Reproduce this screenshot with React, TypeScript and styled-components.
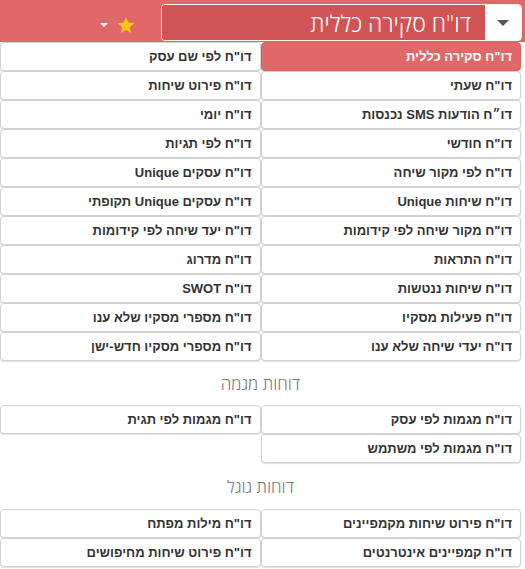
import styled, { createGlobalStyle } from 'styled-components'

const GlobalStyle = createGlobalStyle`
  body {
    margin: 0;
    background: #fff;
    font-family: "Liberation Sans", Arial, sans-serif;
    direction: rtl;
  }
`

const Page = styled.div`
  width: 525px;
  height: 569px;
  overflow: hidden;
`

const Header = styled.header`
  display: flex;
  align-items: center;
  height: 42px;
  padding-right: 3px;
  background-color: #e16868;
  box-sizing: border-box;
`

const Select = styled.div`
  display: flex;
  width: 361px;
  height: 37px;
  margin-top: 3px;
  border: 1px solid #f4f4f4;
  border-radius: 4px;
  overflow: hidden;
  box-sizing: border-box;
`

const CaretBox = styled.div`
  display: flex;
  align-items: center;
  justify-content: center;
  width: 36px;
  background-color: #fff;
`

const SelectValue = styled.div`
  flex: 1;
  display: flex;
  align-items: center;
  padding-right: 14px;
  background-color: #d05455;
  color: #fff;
  font-family: "Open Sans", "DejaVu Sans", sans-serif;
  font-size: 23px;
  font-weight: 300;
`

const Tools = styled.div`
  display: flex;
  align-items: center;
  gap: 9px;
  margin-top: 8px;
  margin-right: 26px;
`

const Menu = styled.div`
  width: 521px;
  margin-right: auto;
`

const Grid = styled.div`
  display: grid;
  grid-template-columns: 1fr 1fr;
  grid-auto-rows: 29px;
`

const Cell = styled.div<{ $active?: boolean }>`
  display: flex;
  align-items: center;
  padding-right: 8px;
  border: 1px solid ${(p) => (p.$active ? '#dc6060' : '#d2d2d2')};
  border-radius: 4px;
  box-shadow: 0 1px 1px rgba(0, 0, 0, 0.12);
  background-color: ${(p) => (p.$active ? '#e16868' : '#fff')};
  color: ${(p) => (p.$active ? '#fff' : '#333')};
  font-size: 13px;
  font-weight: bold;
  white-space: nowrap;
  box-sizing: border-box;
`

const SectionTitle = styled.div<{ $height: number }>`
  display: flex;
  align-items: center;
  justify-content: center;
  height: ${(p) => p.$height}px;
  color: #7a7a7a;
  font-family: "Open Sans", "DejaVu Sans", sans-serif;
  font-size: 17px;
  font-weight: 300;
`

function DownCaret({ color, size }: { color: string; size: number }) {
  return (
    <svg width={size} height={size / 2} viewBox="0 0 10 5">
      <path d="M0 0 L10 0 L5 5 Z" fill={color} />
    </svg>
  )
}

function Star() {
  return (
    <svg width="18" height="17" viewBox="0 0 24 23">
      <path
        d="M12 0 L15.1 7.6 L23.4 8.3 L17.1 13.7 L19 21.8 L12 17.5 L5 21.8 L6.9 13.7 L0.6 8.3 L8.9 7.6 Z"
        fill="#f8c41a"
      />
    </svg>
  )
}

type Row = [string, string?]

const generalRows: Row[] = [
  ['דו"ח סקירה כללית', 'דו"ח לפי שם עסק'],
  ['דו"ח שעתי', 'דו"ח פירוט שיחות'],
  ['דו״ח הודעות SMS נכנסות', 'דו"ח יומי'],
  ['דו"ח חודשי', 'דו"ח לפי תגיות'],
  ['דו"ח לפי מקור שיחה', 'דו"ח עסקים Unique'],
  ['דו"ח שיחות Unique', 'דו"ח עסקים Unique תקופתי'],
  ['דו"ח מקור שיחה לפי קידומות', 'דו"ח יעד שיחה לפי קידומות'],
  ['דו"ח התראות', 'דו"ח מדרוג'],
  ['דו"ח שיחות ננטשות', 'דו"ח SWOT'],
  ['דו"ח פעילות מסקיו', 'דו"ח מספרי מסקיו שלא ענו'],
  ['דו"ח יעדי שיחה שלא ענו', 'דו"ח מספרי מסקיו חדש-ישן'],
]

const trendRows: Row[] = [
  ['דו"ח מגמות לפי עסק', 'דו"ח מגמות לפי תגית'],
  ['דו"ח מגמות לפי משתמש'],
]

const googleRows: Row[] = [
  ['דו"ח פירוט שיחות מקמפיינים', 'דו"ח מילות מפתח'],
  ['דו"ח קמפיינים אינטרנטים', 'דו"ח פירוט שיחות מחיפושים'],
]

const ACTIVE = 'דו"ח סקירה כללית'

function ReportGrid({ rows }: { rows: Row[] }) {
  return (
    <Grid>
      {rows.flatMap(([right, left], i) => [
        <Cell key={`${i}-r`} $active={right === ACTIVE}>
          {right}
        </Cell>,
        left ? <Cell key={`${i}-l`}>{left}</Cell> : <div key={`${i}-l`} />,
      ])}
    </Grid>
  )
}

export default function App() {
  return (
    <Page>
      <GlobalStyle />
      <Header>
        <Select>
          <CaretBox>
            <DownCaret color="#555" size={12} />
          </CaretBox>
          <SelectValue>{ACTIVE}</SelectValue>
        </Select>
        <Tools>
          <Star />
          <DownCaret color="#fff" size={8} />
        </Tools>
      </Header>
      <Menu>
        <ReportGrid rows={generalRows} />
        <SectionTitle $height={44}>דוחות מגמה</SectionTitle>
        <ReportGrid rows={trendRows} />
        <SectionTitle $height={46}>דוחות גוגל</SectionTitle>
        <ReportGrid rows={googleRows} />
      </Menu>
    </Page>
  )
}
